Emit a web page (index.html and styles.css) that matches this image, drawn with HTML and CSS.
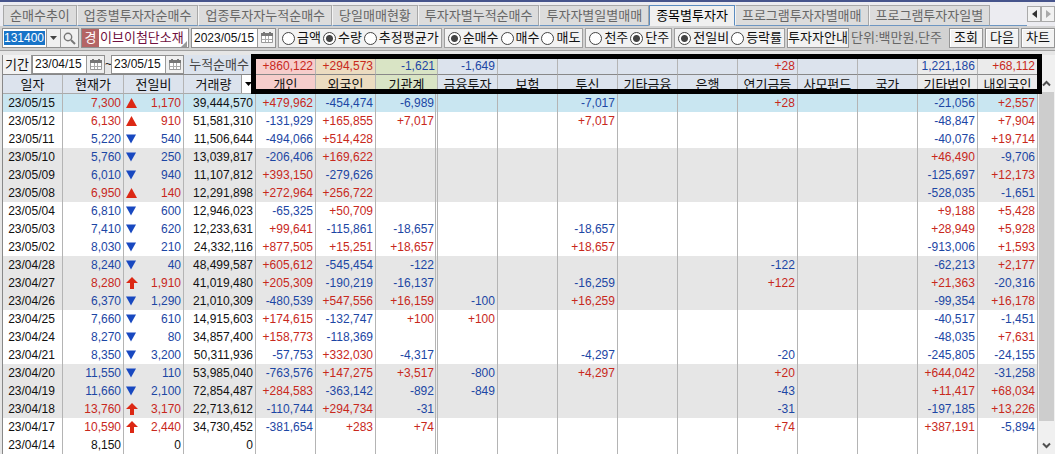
FILE: index.html
```html
<!DOCTYPE html>
<html lang="ko">
<head>
<meta charset="utf-8">
<title>종목별투자자</title>
<link rel="stylesheet" href="styles.css">
</head>
<body>
<nav class="tabs">
  <button class="tab">순매수추이</button>
  <button class="tab">업종별투자자순매수</button>
  <button class="tab">업종투자자누적순매수</button>
  <button class="tab">당일매매현황</button>
  <button class="tab">투자자별누적순매수</button>
  <button class="tab">투자자별일별매매</button>
  <button class="tab active">종목별투자자</button>
  <button class="tab">프로그램투자자별매매</button>
  <button class="tab">프로그램투자자일별</button>
  <span class="tab-fill"></span>
  <span class="pager">
    <button aria-label="이전 탭"><svg width="5" height="8"><path d="M5 0v8L0 4z" fill="#333"/></svg></button>
    <button aria-label="다음 탭"><svg width="5" height="8"><path d="M0 0v8L5 4z" fill="#aaa"/></svg></button>
  </span>
</nav>
<form class="toolbar">
  <span class="field code">
    <input type="text" value="131400" aria-label="종목코드">
    <button type="button" aria-label="종목 목록"><svg width="7" height="4"><path d="M0 0h7L3.5 4z" fill="#444"/></svg></button>
    <button type="button" class="search" aria-label="종목 검색"><svg width="13" height="13" fill="none" stroke="#777"><circle cx="5" cy="5" r="3.7" stroke-width="1.4"/><path d="M8 8l4 4" stroke-width="2"/></svg></button>
  </span>
  <span class="field name"><b>경</b><span>이브이첨단소재</span></span>
  <span class="field day">
    <input type="text" value="2023/05/15" aria-label="기준일">
    <button type="button" aria-label="달력"><svg width="12" height="12"><use href="#cal"/></svg></button>
  </span>
  <span class="group">
    <label><input type="radio" name="unit">금액</label>
    <label><input type="radio" name="unit" checked>수량</label>
    <label><input type="radio" name="unit">추정평균가</label>
  </span>
  <span class="group">
    <label><input type="radio" name="side" checked>순매수</label>
    <label><input type="radio" name="side">매수</label>
    <label><input type="radio" name="side">매도</label>
  </span>
  <span class="group">
    <label><input type="radio" name="lot">천주</label>
    <label><input type="radio" name="lot" checked>단주</label>
  </span>
  <span class="group">
    <label><input type="radio" name="diff" checked>전일비</label>
    <label><input type="radio" name="diff">등락률</label>
  </span>
  <button type="button" class="btn guide">투자자안내</button>
  <span class="note">단위:백만원,단주</span>
  <button type="button" class="btn">조회</button>
  <button type="button" class="btn">다음</button>
  <button type="button" class="btn">차트</button>
</form>
<main class="board">
  <table>
    <colgroup>
      <col class="c-date"><col class="c-price"><col class="c-diff"><col class="c-vol">
      <col><col><col class="c-inst"><col><col><col><col><col><col><col><col><col><col>
    </colgroup>
    <thead>
      <tr class="sum">
        <td colspan="3" class="period">
          <div class="range">
            <span class="range-label">기간</span>
            <span class="field"><input type="text" value="23/04/15" aria-label="시작일"><button type="button" aria-label="시작일 달력"><svg width="12" height="12"><use href="#cal"/></svg></button></span>
            <span class="tilde">~</span>
            <span class="field"><input type="text" value="23/05/15" aria-label="종료일"><button type="button" aria-label="종료일 달력"><svg width="12" height="12"><use href="#cal"/></svg></button></span>
          </div>
        </td>
        <td class="cum">누적순매수</td>
        <td class="pink up">+860,122</td><td class="sand up">+294,573</td><td class="green down">-1,621</td>
        <td class="down">-1,649</td><td></td><td></td><td></td><td></td><td class="up">+28</td><td></td><td></td>
        <td class="plain down">1,221,186</td><td class="plain up">+68,112</td>
      </tr>
      <tr class="heads">
        <th>일자</th><th>현재가</th><th>전일비</th>
        <th><div class="vol-head"><span>거래량</span><button type="button" aria-label="열 선택"><svg width="7" height="4"><path d="M0 0h7L3.5 4z"/></svg></button></div></th>
        <th class="pink">개인</th><th class="sand">외국인</th><th class="green">기관계</th>
        <th>금융투자</th><th>보험</th><th>투신</th><th>기타금융</th><th>은행</th><th>연기금등</th><th>사모펀드</th><th>국가</th>
        <th class="plain">기타법인</th><th class="plain">내외국인</th>
      </tr>
    </thead>
    <tbody id="rows"></tbody>
  </table>
  <div class="scroll">
    <button type="button" aria-label="위로"><svg width="9" height="7"><path d="M1 5.500L4.500 2L8 5.500" fill="none" stroke="#505050" stroke-width="2"/></svg></button>
    <span class="thumb"></span>
    <button type="button" aria-label="아래로"><svg width="9" height="7"><path d="M1 1.500L4.500 5L8 1.500" fill="none" stroke="#505050" stroke-width="2"/></svg></button>
  </div>
  <div class="frame"></div>
</main>
<svg class="defs" width="0" height="0">
  <symbol id="cal" viewBox="0 0 12 12">
    <path d="M.5 2.500h11v8H.5z" fill="#fff" stroke="#999"/>
    <path d="M0 1h12v3H0z" fill="#777"/>
    <path d="M2 0h2v2H2zM8 0h2v2H8z" fill="#777"/>
    <path d="M1 7.500h10M4.500 4v6M7.500 4v6" stroke="#aaa" fill="none"/>
  </symbol>
</svg>
<script src="rows.js"></script>
</body>
</html>
```
FILE: styles.css
```css
* { box-sizing: border-box; }
body {
  margin: 0;
  background: #e6e6e6;
  color: #111;
  font: 13px/16px "Liberation Sans", "Noto Sans CJK KR", sans-serif;
  border-top: 2px solid #46548c;
  overflow: hidden;
}
button, input { font: inherit; color: inherit; margin: 0; padding: 0; border-radius: 0; }
button { display: inline-flex; align-items: center; justify-content: center; white-space: nowrap; }
svg { display: block; flex: none; }
.defs { position: absolute; }

.tabs { display: flex; height: 24px; padding: 3px 0 0 3px; background: #ececf1; }
.tab {
  flex: none;
  padding: 0 6px;
  color: #666;
  background: #dcdcdc;
  border: 1px solid #a8a8a8;
  border-left-color: #f4f4f4;
  border-bottom-color: #6d96c2;
}
.tab:first-child { border-left-color: #a8a8a8; }
.tab.active { color: #000; background: #f0f0f0; border-color: #5b8cc0; border-bottom-color: #f0f0f0; }
.tab-fill { flex: 1; border-bottom: 1px solid #6d96c2; }
.pager { display: flex; height: 16px; margin-top: 1px; }
.pager button { width: 14px; background: #f2f2f2; border: 1px solid #aaa; }

.toolbar {
  display: flex;
  align-items: center;
  gap: 2px;
  height: 25px;
  padding-left: 2px;
  background: #d2d2d2;
  border-bottom: 1px solid #a0a0a0;
}
.field { display: flex; flex: none; height: 20px; background: #fff; border: 1px solid #909090; }
.field input { border: 0; background: none; font-size: 12px; outline: 0; min-width: 0; }
.field button { width: 18px; background: #f0f0f0; border: 0; border-left: 1px solid #999; }
.code { width: 77px; }
.code input { width: 41px; height: 14px; margin: 2px 1px; color: #fff; background: #1874c8; flex: none; }
.code button { width: 14px; }
.code .search { width: 18px; }
.name { width: 108px; color: #701040; align-items: center; gap: 1px; white-space: nowrap; }
.name b { flex: none; width: 17px; height: 18px; padding-top: 1px; color: #fff; background: #b46464; text-align: center; font-weight: 400; }
.name::after { content: ""; align-self: flex-end; border: 3px solid #999; border-top-color: transparent; border-left-color: transparent; margin-left: -4px; }
.day { width: 85px; }
.day input { width: 65px; padding-left: 2px; }
.group {
  display: flex;
  flex: none;
  align-items: center;
  gap: 2px;
  height: 20px;
  padding: 0 2px 0 3px;
  background: #f2f2f2;
  border: 1px solid #a0a0a0;
}
.group label { display: flex; align-items: center; gap: 2px; white-space: nowrap; }
.group input { appearance: none; width: 13px; height: 13px; border: 1px solid #444; border-radius: 50%; background: #fff; }
.group input:checked { background: radial-gradient(circle, #444 3px, #fff 4px); }
.btn { flex: none; width: 34px; height: 20px; background: #f2f2f2; border: 1px solid #969696; box-shadow: inset 1px 1px #fff; }
.guide { width: 62px; }
.note { flex: none; width: 96px; color: #666; white-space: nowrap; }

.board { position: relative; display: flex; padding: 4px 0 0 2px; }
table { flex: 1; width: 100%; min-width: 0; table-layout: fixed; border-collapse: separate; border-spacing: 0; border-left: 1px solid #888; background: #fff; }
.c-date, .c-diff { width: 60px; }
.c-price { width: 61px; }
.c-vol { width: 72px; }
.c-inst { width: 62px; }
td, th {
  height: 18px;
  padding: 0 2px 0 0;
  font-size: 12px;
  font-weight: 400;
  line-height: 18px;
  text-align: right;
  white-space: nowrap;
  border-right: 1px solid #b4b4b4;
}
td:first-child { text-align: center; }
tbody td:nth-child(7) { border-right: 3px double #b4b4b4; padding-right: 1px; }
thead td, thead th { background: #dce3ed; }
.sum td { height: 20px; padding-top: 3px; border-bottom: 1px solid #888; line-height: 16px; }
.heads th { height: 19px; padding: 2px 0 0; font-size: 13px; line-height: 16px; text-align: center; border-bottom: 1px solid #aaa; }
.heads th:nth-child(4) { padding: 0; }
thead .pink { background: #f6cdcb; }
thead .sand { background: #ecdcc0; }
thead .green { background: #d9e4c5; }
thead .plain { background: #ebebeb; }
.up { color: #c8281c; }
.down { color: #1c46a4; }
.sum .period { padding: 0; border-right: 0; background: #e6e6e6; }
.sum .cum { color: #444; font-size: 13px; padding: 1px 6px 0 0; }
.range { display: flex; height: 19px; line-height: 19px; }
.range-label { width: 29px; font-size: 13px; text-align: center; background: #f2f2f2; border-right: 1px solid #999; }
.range .field { width: 73px; height: 19px; }
.range .field input { width: 53px; padding-left: 2px; }
.tilde { width: 6px; text-align: center; }
.vol-head { display: flex; height: 18px; }
.vol-head span { flex: 1; padding: 2px 0 0 2px; }
.vol-head button { width: 14px; border: 0; border-left: 1px solid #999; background: #fff; }
.selected { background: #c9e6f1; }
.shade { background: #e6e6e6; }
.diff { display: flex; align-items: center; justify-content: space-between; padding-left: 2px; }

.scroll { flex: none; display: flex; flex-direction: column; width: 17px; padding: 19px 1px 0; background: #f0f0f0; }
.scroll button { height: 18px; border: 0; background: none; }
.thumb { flex: 1; background: #cdcdcd; margin-bottom: 15px; }
.frame { position: absolute; top: 3px; left: 251px; right: 13px; height: 40px; border: 5px solid #000; }
```
FILE: rows.js
```js
// date | price | mark | change | volume | 13 investor columns | row state
// marks: u rise, d fall, U upper limit
const data = `
23/05/15|7,300|u|1,170|39,444,570|+479,962|-454,474|-6,989|||-7,017|||+28|||-21,056|+2,557|selected
23/05/12|6,130|u|910|51,581,310|-131,929|+165,855|+7,017|||+7,017||||||-48,847|+7,904|
23/05/11|5,220|d|540|11,506,644|-494,066|+514,428||||||||||-40,076|+19,714|
23/05/10|5,760|d|250|13,039,817|-206,406|+169,622||||||||||+46,490|-9,706|shade
23/05/09|6,010|d|940|11,107,812|+393,150|-279,626||||||||||-125,697|+12,173|shade
23/05/08|6,950|u|140|12,291,898|+272,964|+256,722||||||||||-528,035|-1,651|shade
23/05/04|6,810|d|600|12,946,023|-65,325|+50,709||||||||||+9,188|+5,428|
23/05/03|7,410|d|620|12,233,631|+99,641|-115,861|-18,657|||-18,657||||||+28,949|+5,928|
23/05/02|8,030|d|210|24,332,116|+877,505|+15,251|+18,657|||+18,657||||||-913,006|+1,593|
23/04/28|8,240|d|40|48,499,587|+605,612|-545,454|-122||||||-122|||-62,213|+2,177|shade
23/04/27|8,280|U|1,910|41,019,480|+205,309|-190,219|-16,137|||-16,259|||+122|||+21,363|-20,316|shade
23/04/26|6,370|d|1,290|21,010,309|-480,539|+547,556|+16,159|-100||+16,259||||||-99,354|+16,178|shade
23/04/25|7,660|d|610|14,915,603|+174,615|-132,747|+100|+100||||||||-40,517|-1,451|
23/04/24|8,270|d|80|34,857,400|+158,773|-118,369||||||||||-48,035|+7,631|
23/04/21|8,350|d|3,200|50,311,936|-57,753|+332,030|-4,317|||-4,297|||-20|||-245,805|-24,155|
23/04/20|11,550|d|110|53,985,040|-763,576|+147,275|+3,517|-800||+4,297|||+20|||+644,042|-31,258|shade
23/04/19|11,660|d|2,100|72,854,487|+284,583|-363,142|-892|-849|||||-43|||+11,417|+68,034|shade
23/04/18|13,760|U|3,170|22,713,612|-110,744|+294,734|-31||||||-31|||-197,185|+13,226|shade
23/04/17|10,590|U|2,440|34,730,452|-381,654|+283|+74||||||+74|||+387,191|-5,894|
23/04/14|8,150||0|0||||||||||||||`;

const marks = {
  u: '<svg width="11" height="10"><path d="M5.500 0L11 10H0z" fill="#dc2814"/></svg>',
  d: '<svg width="11" height="10"><path d="M0 0.500h10L5 9.500z" fill="#1848c0"/></svg>',
  U: '<svg width="12" height="12"><path d="M6 0l6 6H8v6H4V6H0z" fill="#dc2814"/></svg>',
  '': '<span></span>'
};
const tone = v => v[0] === '+' ? 'up' : v[0] === '-' ? 'down' : '';

document.getElementById('rows').innerHTML = data.trim().split('\n').map(line => {
  const [date, price, mark, change, volume, ...rest] = line.split('|');
  const state = rest[13] || '';
  const move = mark === 'd' ? 'down' : mark ? 'up' : '';
  const cells = rest.slice(0, 13).map(v => `<td class="${tone(v)}">${v}</td>`).join('');
  return `<tr class="${state}"><td>${date}</td><td class="${move}">${price}</td>` +
    `<td class="${move}"><div class="diff">${marks[mark]}<span>${change}</span></div></td>` +
    `<td>${volume}</td>${cells}</tr>`;
}).join('');
```
